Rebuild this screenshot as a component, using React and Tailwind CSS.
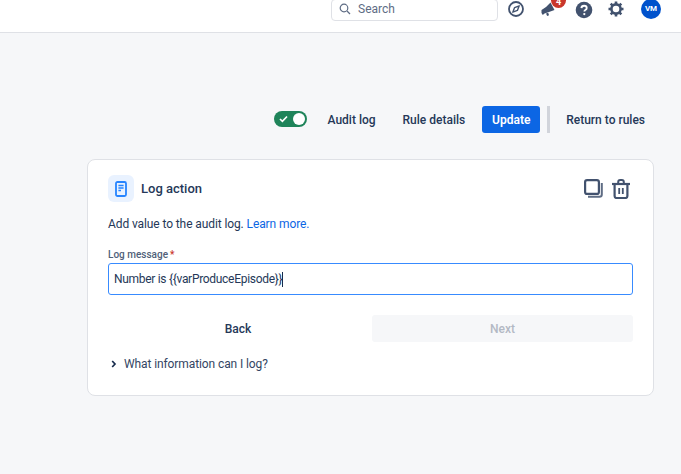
import React from "react";

function Compass() {
  return (
    <svg width="16" height="16" viewBox="0 0 16 16" fill="none">
      <circle cx="8" cy="8" r="7" stroke="#42526e" strokeWidth="1.8" />
      <path d="M11.2 4.8 9.4 9.4 4.8 11.2 6.6 6.6Z" fill="none" stroke="#42526e" strokeWidth="1.4" strokeLinejoin="round" />
    </svg>
  );
}

function Megaphone() {
  return (
    <svg width="16" height="16" viewBox="0 0 16 16" fill="#42526e">
      <path d="M0.5 9 5 6 9.5 1.5 13.5 9 8 11 3.5 12.5 1.8 14 0.5 12Z" />
      <path d="M5 12.5 6.2 15 8 14.2 7.2 11.8Z" />
    </svg>
  );
}

function Help() {
  return (
    <svg width="18" height="18" viewBox="0 0 18 18">
      <circle cx="9" cy="9" r="8.3" fill="#42526e" />
      <path d="M6.4 7.1C6.5 5.6 7.6 4.7 9.1 4.7c1.5 0 2.6.9 2.6 2.2 0 1-.5 1.6-1.4 2.1-.7.4-.9.7-.9 1.4" fill="none" stroke="#fff" strokeWidth="1.9" />
      <circle cx="9.3" cy="13.1" r="1.15" fill="#fff" />
    </svg>
  );
}

function Gear() {
  return (
    <svg width="16" height="16" viewBox="0 0 16 16" fill="none">
      <circle cx="8" cy="8" r="4.6" stroke="#42526e" strokeWidth="2.6" />
      <path d="M8 .5v3M8 12.5v3M.5 8h3M12.5 8h3M2.7 2.7l2 2M11.3 11.3l2 2M13.3 2.7l-2 2M4.7 11.3l-2 2" stroke="#42526e" strokeWidth="2.6" />
    </svg>
  );
}

function DocIcon() {
  return (
    <svg width="12" height="16" viewBox="0 0 12 16" fill="none">
      <rect x="1" y="1" width="10" height="14" rx="1.5" stroke="#2684ff" strokeWidth="1.8" />
      <path d="M3.4 4.6h5.2M3.4 7h5.2M3.4 9.4h2.6" stroke="#2684ff" strokeWidth="1.5" />
    </svg>
  );
}

function Copy() {
  return (
    <svg width="19" height="19" viewBox="0 0 19 19" fill="none">
      <rect x="1.1" y="1.1" width="13.8" height="13.8" rx="2" stroke="#42526e" strokeWidth="2.2" />
      <path d="M17.8 4v11.5a2.3 2.3 0 0 1-2.3 2.3H4" stroke="#5e6c84" strokeWidth="2" />
    </svg>
  );
}

function Trash() {
  return (
    <svg width="18" height="20" viewBox="0 0 18 20" fill="none">
      <path d="M0 5h18" stroke="#42526e" strokeWidth="2.2" />
      <path d="M6.2 4.5V3c0-1.1.9-2 2-2h1.6c1.1 0 2 .9 2 2v1.5" stroke="#42526e" strokeWidth="2" />
      <path d="M2.6 5v12a2 2 0 0 0 2 2h8.8a2 2 0 0 0 2-2V5" stroke="#42526e" strokeWidth="2.2" />
      <path d="M7.2 9v6M10.8 9v6" stroke="#42526e" strokeWidth="1.8" />
    </svg>
  );
}

export default function App() {
  return (
    <div className="w-[681px] h-[474px] overflow-hidden bg-[#f6f7f9] font-['Roboto',sans-serif] text-[#253858] flex flex-col">
      <header className="h-[33px] shrink-0 bg-white border-b border-[#dfe1e6] flex items-start">
        <div className="w-[167px] h-[22px] ml-auto -mt-px border border-[#dfe1e6] rounded-[4px] flex items-center pl-[7px] gap-[7px] pb-[2px] text-[12px] text-[#5e6c84]">
          <svg width="12" height="12" viewBox="0 0 12 12" fill="none">
            <circle cx="5" cy="5" r="3.8" stroke="#5e6c84" strokeWidth="1.2" />
            <path d="M8 8l3 3" stroke="#5e6c84" strokeWidth="1.3" />
          </svg>
          <span>Search</span>
        </div>
        <div className="ml-[10px] mt-px w-[16px]"><Compass /></div>
        <div className="relative ml-[17px] mt-px w-[16px]">
          <Megaphone />
          <span className="absolute -top-[8px] left-[10px] w-[15px] h-[15px] rounded-full bg-[#c9372c] text-white text-[9px] font-bold flex items-center justify-center pt-[4px]">4</span>
        </div>
        <div className="ml-[18px] mt-px w-[18px]"><Help /></div>
        <div className="ml-[15px] mt-px w-[16px]"><Gear /></div>
        <div className="ml-[17px] mr-[20px] -mt-px w-[20px] h-[20px] rounded-full bg-[#0052cc] text-white text-[8px] font-bold flex items-center justify-center">VM</div>
      </header>

      <main className="pl-[87px] pr-[27px] pt-[72px]">
        <div className="flex items-center h-[28px] justify-end pr-[9px] text-[12px] font-medium">
          <div className="w-[33px] h-[16px] rounded-full bg-[#1f845a] flex items-center justify-between pl-[5px] pr-[2px]">
            <svg width="9" height="8" viewBox="0 0 9 8" fill="none">
              <path d="M1 4l2.4 2.4L8 1.5" stroke="#fff" strokeWidth="1.7" />
            </svg>
            <span className="w-[12px] h-[12px] rounded-full bg-white" />
          </div>
          <span className="ml-[21px] pt-[2px]">Audit log</span>
          <span className="ml-[27px] pt-[2px]">Rule details</span>
          <button className="ml-[17px] w-[58px] h-[27px] rounded-[3px] bg-[#0c66e4] text-white font-semibold pt-px">Update</button>
          <span className="ml-[7px] w-[3px] h-[27px] bg-[#d1d4db]" />
          <span className="ml-[16px] pt-[2px]">Return to rules</span>
        </div>

        <section className="mt-[26px] h-[237px] bg-white border border-[#dfe1e6] rounded-[8px] px-[20px] pt-[15px]">
          <div className="flex items-center h-[27px]">
            <div className="w-[26px] h-[27px] rounded-[6px] bg-[#e9f2ff] flex items-center justify-center">
              <DocIcon />
            </div>
            <h2 className="ml-[7px] text-[13px] font-medium leading-none">Log action</h2>
            <div className="ml-auto mr-[3px] flex items-center gap-[9px]">
              <Copy />
              <Trash />
            </div>
          </div>
          <p className="mt-[13px] text-[12px] leading-[18px] tracking-[-0.1px]">
            Add value to the audit log. <span className="text-[#0c66e4]">Learn more.</span>
          </p>
          <div className="mt-[15px] flex text-[10px] leading-[14px] font-medium text-[#505f79]">
            Log message<span className="ml-[2px] text-[#c9372c]">*</span>
          </div>
          <div className="mt-px h-[32px] border border-[#388bff] rounded-[3px] flex items-center px-[5px] text-[12px] tracking-[-0.3px]">
            <span>Number is {"{{varProduceEpisode}}"}</span>
            <span className="w-px h-[15px] bg-[#172b4d]" />
          </div>
          <div className="mt-[20px] flex gap-[4px] h-[27px] text-[12px] font-medium">
            <button className="flex-1 pt-px">Back</button>
            <button className="w-[261px] h-[27px] rounded-[3px] bg-[#f6f7f9] text-[#b3b9c4] pt-px">Next</button>
          </div>
          <div className="mt-[13px] flex items-center text-[12px] leading-[18px] text-[#344563] tracking-[-0.1px]">
            <svg width="6" height="8" viewBox="0 0 6 8" fill="none" className="ml-[3px]">
              <path d="M1.2 1l2.8 3-2.8 3" stroke="#172b4d" strokeWidth="1.7" />
            </svg>
            <span className="ml-[7px]">What information can I log?</span>
          </div>
        </section>
      </main>
    </div>
  );
}
